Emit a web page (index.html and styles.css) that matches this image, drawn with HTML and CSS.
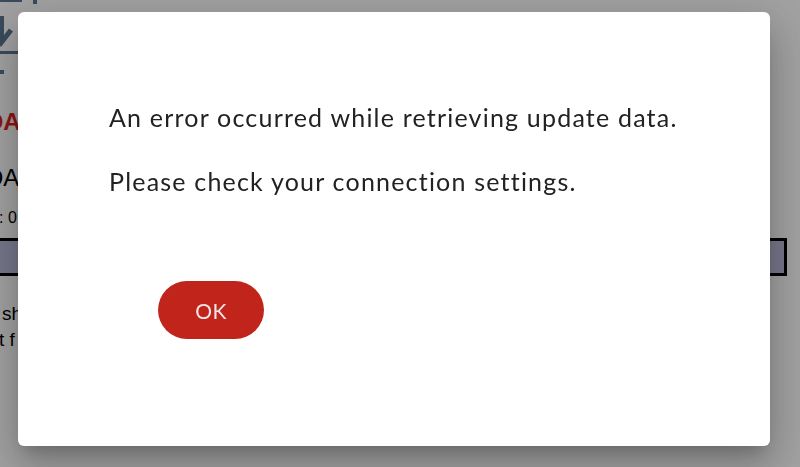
FILE: index.html
```html
<!DOCTYPE html>
<html lang="en">
<head>
<meta charset="utf-8">
<title>Update error</title>
<link rel="stylesheet" href="styles.css">
</head>
<body>
<div class="page">
  <div class="topbar"><span class="tb-line"></span><span class="tb-tick"></span></div>
  <svg class="dl-icon" width="40" height="62" viewBox="0 0 40 62">
    <path d="M1 4 V30" stroke="#5d7690" stroke-width="6" fill="none"/>
    <path d="M-9 18 L1 31 L11 18" stroke="#5d7690" stroke-width="5" fill="none" stroke-linejoin="miter"/>
    <rect x="0" y="39" width="40" height="3" fill="#5d7690"/>
    <rect x="0" y="58" width="4" height="4" fill="#5d7690"/>
  </svg>
  <div class="bg-title red">DATA</div>
  <div class="bg-title black">DATA</div>
  <div class="bg-small">: 0</div>
  <div class="bg-bar"></div>
  <div class="bg-text"><span class="t1">sh</span><span class="t2">t f</span></div>
</div>

<div class="overlay">
  <div class="dialog" role="alertdialog">
    <div class="dialog-body">
      <p>An error occurred while retrieving update data.</p>
      <p>Please check your connection settings.</p>
    </div>
    <div class="dialog-actions">
      <button class="ok-btn" type="button">OK</button>
    </div>
  </div>
</div>
</body>
</html>
```

FILE: styles.css
```css
html, body {
  margin: 0;
  padding: 0;
  background: #ffffff;
  overflow: hidden;
}
body {
  width: 800px;
  height: 467px;
  font-family: "Liberation Sans", Arial, sans-serif;
}
.page {
  display: flex;
  flex-direction: column;
  align-items: flex-start;
}
.topbar {
  display: flex;
  gap: 11px;
  height: 6px;
}
.tb-line {
  width: 22px;
  height: 2px;
  background: #5d7690;
}
.tb-tick {
  width: 4px;
  height: 4px;
  background: #5d7690;
}
.dl-icon {
  display: block;
  margin-top: 6px;
}
.bg-title {
  font-size: 24px;
  line-height: 28px;
  white-space: nowrap;
  margin-left: -14px;
}
.bg-title.red {
  color: #e01e1e;
  font-weight: bold;
  margin-top: 34px;
}
.bg-title.black {
  color: #000;
  margin-top: 28px;
}
.bg-small {
  font-size: 16px;
  line-height: 18px;
  margin-top: 17px;
  margin-left: -1px;
  color: #000;
}
.bg-bar {
  width: 784px;
  height: 32px;
  margin-top: 11px;
  border: 3px solid #000;
  background: #bbbcdb;
  margin-left: -3px;
}
.bg-text {
  display: flex;
  flex-direction: column;
  font-size: 19px;
  line-height: 26px;
  margin-top: 25px;
  color: #000;
}
.t1 { margin-left: 2px; }
.t2 { margin-left: -1px; }

.overlay {
  position: fixed;
  inset: 0;
  background: rgba(0, 0, 0, 0.37);
}
.dialog {
  position: absolute;
  left: 18px;
  top: 12px;
  width: 752px;
  height: 434px;
  background: #ffffff;
  border-radius: 6px;
  box-shadow: 0 11px 15px -7px rgba(0,0,0,.2), 0 24px 38px 3px rgba(0,0,0,.14), 0 9px 46px 8px rgba(0,0,0,.12);
  display: flex;
  flex-direction: column;
  font-family: Lato, "Open Sans", sans-serif;
}
.dialog-body {
  padding: 89px 0 0 91px;
  color: #222222;
  font-size: 25px;
  letter-spacing: 1.2px;
  line-height: 32px;
}
.dialog-body p {
  margin: 0 0 32px 0;
}
.dialog-actions {
  padding: 52px 0 0 140px;
}
.ok-btn {
  width: 106px;
  height: 58px;
  border: none;
  border-radius: 29px;
  background: #c1241b;
  color: #f3e6e6;
  font-family: Lato, "Open Sans", sans-serif;
  font-size: 21px;
  letter-spacing: 0.5px;
  padding: 0;
}
```
